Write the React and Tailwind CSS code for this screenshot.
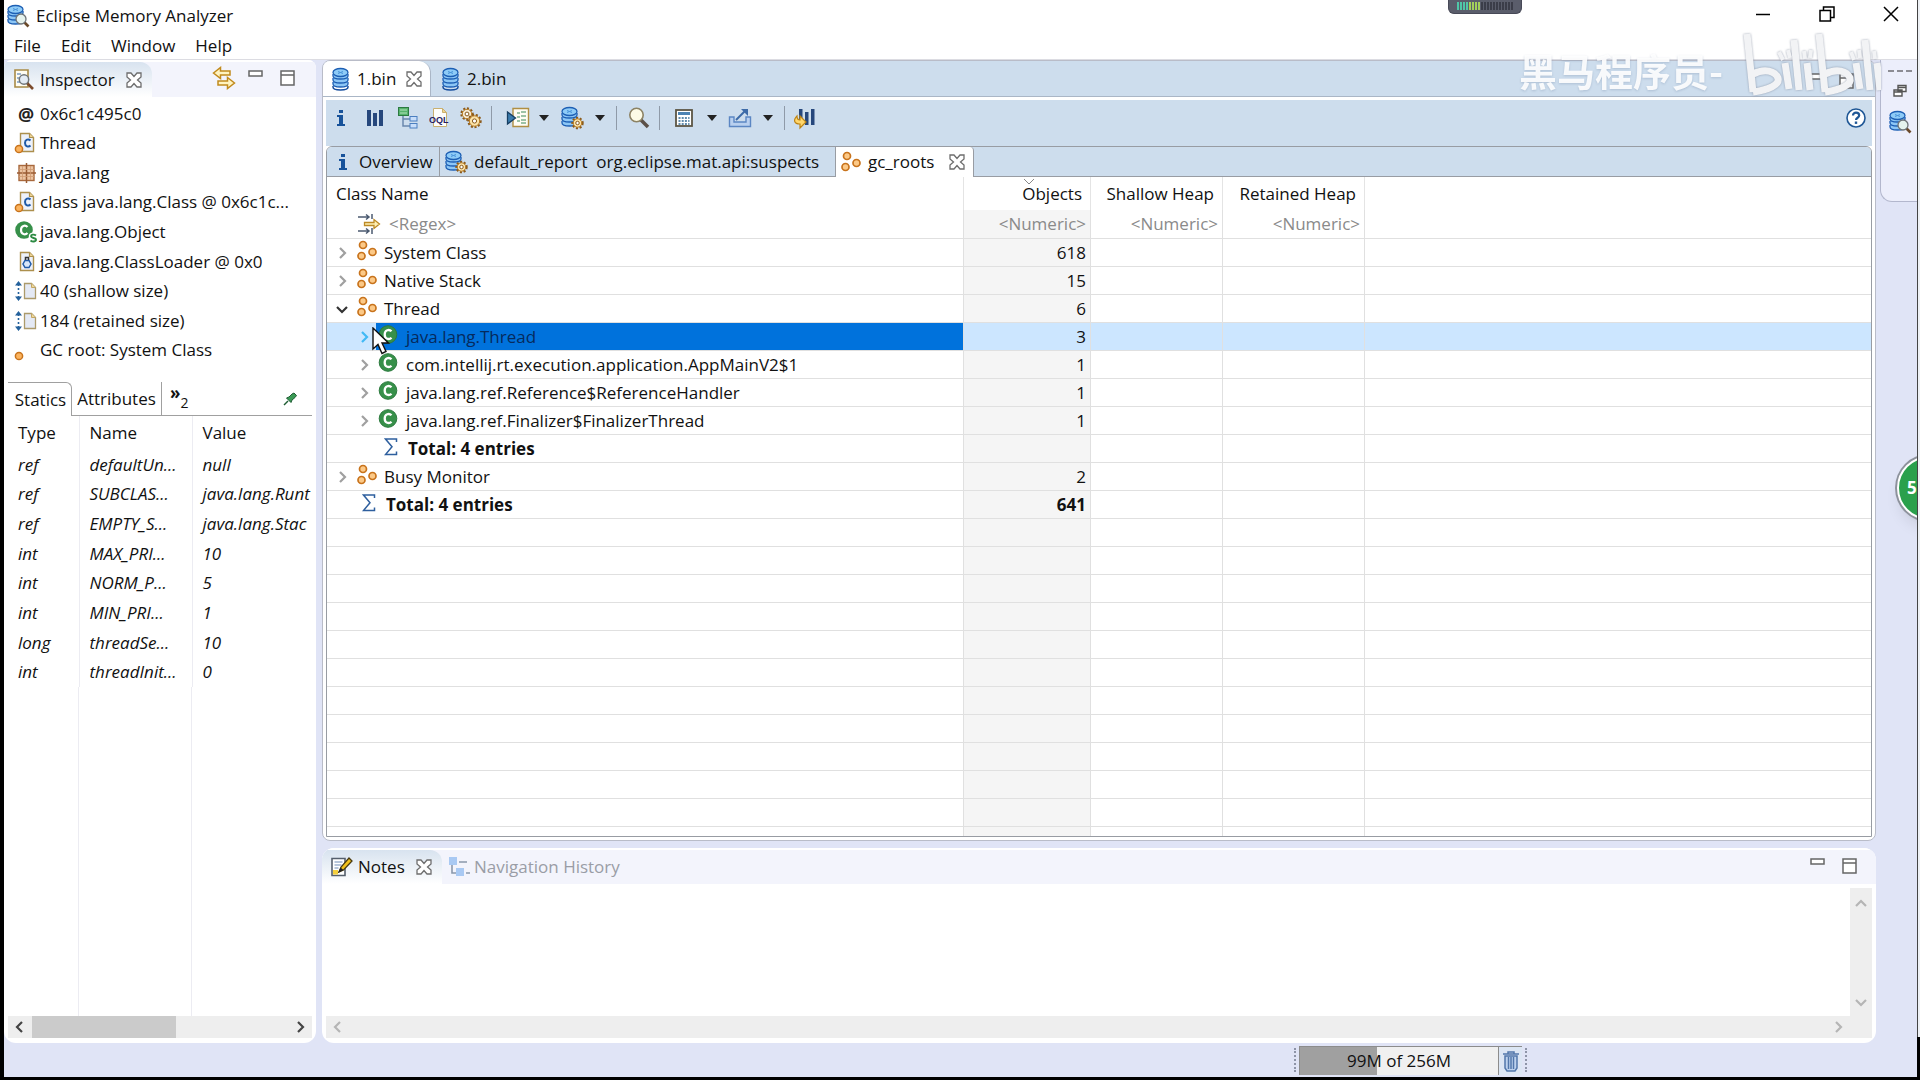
import React, { useState } from 'react';

const inspectorRows = [
    { icon: 'at', text: '0x6c1c495c0' },
    { icon: 'classFile', text: 'Thread' },
    { icon: 'package', text: 'java.lang' },
    { icon: 'classFile', text: 'class java.lang.Class @ 0x6c1c...' },
    { icon: 'superClass', text: 'java.lang.Object' },
    { icon: 'loader', text: 'java.lang.ClassLoader @ 0x0' },
    { icon: 'size', text: '40 (shallow size)' },
    { icon: 'size', text: '184 (retained size)' },
    { icon: 'root', text: 'GC root: System Class' },
];

const statics = [
    ['ref', 'defaultUn...', 'null'],
    ['ref', 'SUBCLAS...', 'java.lang.Runt'],
    ['ref', 'EMPTY_S...', 'java.lang.Stac'],
    ['int', 'MAX_PRI...', '10'],
    ['int', 'NORM_P...', '5'],
    ['int', 'MIN_PRI...', '1'],
    ['long', 'threadSe...', '10'],
    ['int', 'threadInit...', '0'],
];

const roots = [
    { kind: 'group', name: 'System Class', objects: 618 },
    { kind: 'group', name: 'Native Stack', objects: 15 },
    { kind: 'group', name: 'Thread', objects: 6, open: true },
    { kind: 'class', name: 'java.lang.Thread', objects: 3, selected: true },
    { kind: 'class', name: 'com.intellij.rt.execution.application.AppMainV2$1', objects: 1 },
    { kind: 'class', name: 'java.lang.ref.Reference$ReferenceHandler', objects: 1 },
    { kind: 'class', name: 'java.lang.ref.Finalizer$FinalizerThread', objects: 1 },
    { kind: 'total', name: 'Total: 4 entries', nested: true },
    { kind: 'group', name: 'Busy Monitor', objects: 2 },
    { kind: 'total', name: 'Total: 4 entries', objects: 641 },
];

const emptyRows = Array.from({ length: 12 }, (_, i) => i);

/* ---------- icons ---------- */

const Discs = () => (
    <g stroke="#1d5fb4" strokeWidth="1.3">
        {[17, 13, 9].map((y) => (
            <path key={y} d={`M2 ${y - 2}v2c0 4 15 4 15 0v-2`} fill="#8cc6f5" />
        ))}
        <ellipse cx="9.5" cy="5.5" rx="7.5" ry="4" fill="#8ecbf7" />
        <path d="M7 4.5l5 2M7 6.5l5-2" stroke="#4a94da" strokeWidth="1" />
    </g>
);

const DbIcon = () => (
    <svg className="w-5 h-6 shrink-0" viewBox="0 0 20 24" fill="none"><Discs /><path d="M2 19v1c0 4 15 4 15 0v-1" stroke="#174f9f" strokeWidth="1.5" /></svg>
);

const Cog = ({ x, y, r, fill = '#fbe3a8' }) => (
    <g transform={`translate(${x} ${y})`}>
        <circle r={r} fill="none" stroke="#8a5a1c" strokeWidth="2.4" strokeDasharray="2 1.6" />
        <circle r={r - 0.8} fill={fill} stroke="#b87a20" strokeWidth="1" />
        <circle r={r * 0.35} fill="#fff" stroke="#8a5a1c" strokeWidth="1" />
    </g>
);

const DbGearIcon = () => (
    <svg className="w-6 h-6 shrink-0" viewBox="0 0 24 24" fill="none"><Discs /><Cog x={17.5} y={17} r={5} /></svg>
);

const DbSearchIcon = () => (
    <svg className="w-6 h-6 shrink-0" viewBox="0 0 24 24" fill="none">
        <Discs />
        <path d="M18.500 18.500l4 4" stroke="#6b4a2a" strokeWidth="2.600" />
        <circle cx="15" cy="15" r="5" fill="#e6f3ee" stroke="#6f7478" strokeWidth="1.300" />
    </svg>
);

const InfoIcon = () => (
    <svg className="w-3 h-5 shrink-0" viewBox="0 0 12 20" fill="#17529a">
        <rect x="4" y="2" width="4" height="3" />
        <path d="M2 7h6v9h2v2H2v-2h2V9H2z" />
    </svg>
);

const BarsIcon = () => (
    <svg className="w-5 h-5 shrink-0" viewBox="0 0 20 20" fill="#26477c">
        <rect x="2" y="2" width="4" height="16" /><rect x="8" y="5" width="4" height="13" /><rect x="14" y="2" width="4" height="16" />
    </svg>
);

const TreeIcon = () => (
    <svg className="w-6 h-6 shrink-0" viewBox="0 0 24 24" fill="none">
        <path d="M6 10v10h7M6 13h7" stroke="#6a87ad" strokeWidth="1.500" />
        <rect x="1.500" y="1.500" width="10" height="8" fill="#56b36c" stroke="#2c7a42" />
        <path d="M3 4h7M3 7h7" stroke="#b5e2bd" />
        <rect x="13" y="10.500" width="7" height="4.500" fill="#c8defa" stroke="#4b7fc0" />
        <rect x="13" y="17.500" width="7" height="4.500" fill="#c8defa" stroke="#4b7fc0" />
    </svg>
);

const OqlIcon = () => (
    <svg className="w-5 h-6 shrink-0" viewBox="0 0 20 24" fill="none">
        <path d="M4.500 2.500h9l4 4v14h-13z" fill="#fdfdfb" stroke="#c9b070" />
        <path d="M13.500 2.500v4h4z" fill="#f0d58d" stroke="#c9b070" />
        <text x="0" y="17" fontSize="9" fontWeight="bold" fontFamily="Liberation Sans, sans-serif" fill="#2a1d63">OQL</text>
    </svg>
);

const GearsIcon = () => (
    <svg className="w-6 h-6 shrink-0" viewBox="0 0 24 24" fill="none">
        <Cog x={8} y={8} r={5.5} fill="#f7ecd4" /><Cog x={15.5} y={15} r={6} />
    </svg>
);

const RunReportIcon = () => (
    <svg className="w-6 h-6 shrink-0" viewBox="0 0 24 24" fill="none">
        <path d="M7 2.500h15.500v18H7z" fill="#fffdf4" stroke="#b08f43" strokeWidth="1.400" />
        <path d="M11 7h3M11 11h3M11 15h3M15 6h5M15 10h5M15 14h5M15 17h5" stroke="#3d8a58" strokeWidth="1.200" />
        <path d="M1.500 6v12l8-6z" fill="#3a7cae" stroke="#173f63" strokeWidth="1.300" />
    </svg>
);

const SearchIcon = () => (
    <svg className="w-6 h-6 shrink-0" viewBox="0 0 24 24" fill="none">
        <path d="M14 14l7 7" stroke="#5c5048" strokeWidth="3.600" />
        <circle cx="9.500" cy="9" r="6.700" fill="#fdfbe6" stroke="#8c8264" strokeWidth="1.600" />
    </svg>
);

const CalcIcon = () => (
    <svg className="w-5 h-5 shrink-0" viewBox="0 0 20 20" fill="none">
        <rect x="2" y="2" width="16" height="16" fill="#fff" stroke="#5b5544" strokeWidth="1.800" />
        <rect x="4" y="4" width="12" height="3" fill="#4c83b3" />
        <path d="M4.500 10h11M4.500 13h11M4.500 16h11" stroke="#2f6792" strokeWidth="1.600" strokeDasharray="2 1.200" />
    </svg>
);

const ExportIcon = () => (
    <svg className="w-6 h-6 shrink-0" viewBox="0 0 24 24" fill="none">
        <path d="M6 11H1.500v9.500h21V11H18v5H6z" fill="#b9d0ef" stroke="#5b86c3" strokeWidth="1.400" />
        <path d="M8 14L18 4" stroke="#3d6ba8" strokeWidth="2" />
        <path d="M13 3h7v7z" fill="#3d6ba8" />
    </svg>
);

const CompareIcon = () => (
    <svg className="w-6 h-6 shrink-0" viewBox="0 0 24 24" fill="none">
        <path d="M6 3h3.500v12H6zM12 6h3.500v13H12zM18 3h3.500v16H18z" fill="#26477c" />
        <path d="M4 10c-4 4-3 8 3 8v4l6-6-6-6v4c-2 0-3-1-3-4z" fill="#ffd66b" stroke="#bd8415" strokeWidth="1.200" />
    </svg>
);

const HelpIcon = () => (
    <svg className="w-[22px] h-[22px] shrink-0" viewBox="0 0 22 22" fill="none">
        <circle cx="11" cy="11" r="9" fill="#fff" stroke="#1f5796" strokeWidth="1.600" />
        <path d="M8 8.500c0-4 6.200-3.600 6.200 0 0 2.200-3.200 2.300-3.200 4.500" stroke="#1f5796" strokeWidth="2.200" />
        <rect x="9.800" y="14.500" width="2.400" height="2.400" fill="#1f5796" />
    </svg>
);

// three orange root dots
const RootsIcon = () => (
    <svg className="w-[22px] h-[22px] shrink-0" viewBox="0 0 22 22" fill="#fcc987" stroke="#c8731c" strokeWidth="1.700">
        <circle cx="7" cy="5" r="3.500" /><circle cx="5.500" cy="16" r="3.500" /><circle cx="16.500" cy="12" r="3.500" />
    </svg>
);

const ClassIcon = () => (
    <svg className="w-5 h-5 shrink-0" viewBox="0 0 20 20" fill="none">
        <circle cx="10" cy="9.500" r="8.800" fill="#37904a" stroke="#2c7a3e" />
        <path d="M13.500 6.300c-2.300-2.400-6.800-1.500-6.800 3.200s4.500 5.600 6.800 3.200" stroke="#fff" strokeWidth="2.300" />
    </svg>
);

const SigmaIcon = () => (
    <svg className="w-[14px] h-[18px] shrink-0" viewBox="0 0 14 18" fill="none">
        <path d="M12.500 4V1H1.500L8 8.700 1.500 16.500h11v-3" stroke="#2e5f9e" strokeWidth="1.500" />
    </svg>
);

const FilterIcon = () => (
    <svg className="w-6 h-6 shrink-0" viewBox="0 0 24 24" fill="none">
        <path d="M1 5h11M9 2.500l3 2.500-3 2.500M15 2v5M1 19h11M9 16.500l3 2.500-3 2.500M15 16v6" stroke="#4b5a70" strokeWidth="1.500" />
        <path d="M7.500 10.500H17V7.500l5.500 4.500-5.500 4.500v-3H7.500z" fill="#fff0b4" stroke="#bd8a26" strokeWidth="1.300" />
    </svg>
);

const PageShape = () => (
    <>
        <path d="M6.500 2.500h9l4 4v14h-13z" fill="#edf1fa" stroke="#ac8f4d" strokeWidth="1.400" />
        <path d="M15.500 2.500v4h4" fill="#f0d899" stroke="#ac8f4d" strokeWidth="1.200" />
    </>
);

const Dot = ({ cx = 5, cy = 18 }) => <circle cx={cx} cy={cy} r="3.600" fill="#fcb45f" stroke="#c8731c" strokeWidth="1.500" />;

const inspectorIcons = {
    at: <text x="4" y="19" fontSize="18" fontWeight="bold" fontFamily="Open Sans, sans-serif" fill="#222">@</text>,
    classFile: (
        <>
            <PageShape />
            <path d="M16.500 9.500c-2-2-5.500-1-5.500 2.500s3.500 4.500 5.500 2.500" stroke="#1f5aa8" strokeWidth="2" />
            <Dot />
        </>
    ),
    package: (
        <>
            <rect x="5" y="4.500" width="15" height="15" fill="#ecc4a2" stroke="#a8683c" strokeWidth="1.400" />
            <path d="M12.500 2v20M3 12h19" stroke="#9a5c34" strokeWidth="1.500" />
            <path d="M8.500 5v14M16.500 5v14M5 8.500h15M5 15.500h15" stroke="#cf9a72" strokeWidth="0.800" />
        </>
    ),
    superClass: (
        <>
            <circle cx="10" cy="10" r="8.800" fill="#37904a" />
            <path d="M13.500 7c-2.300-2.400-6.500-1.500-6.500 3s4.200 5.300 6.500 3" stroke="#fff" strokeWidth="2.200" />
            <path d="M22 15.500c-2-1.500-5-1-5 .8 0 2.200 5 1.200 5 3.500 0 2-3.500 2.200-5.500.6" stroke="#fff" strokeWidth="4.500" />
            <path d="M22 15.500c-2-1.500-5-1-5 .8 0 2.200 5 1.200 5 3.500 0 2-3.500 2.200-5.500.6" stroke="#2c8a42" strokeWidth="1.900" />
        </>
    ),
    loader: (
        <>
            <PageShape />
            <path d="M11 10.500h4l2 3.500-2 3.500h-4L9 14z" fill="#d7e6fa" stroke="#1f5aa8" strokeWidth="1.500" />
            <path d="M11.500 10V7.500h3V10" stroke="#333" strokeWidth="1.500" />
        </>
    ),
    size: (
        <>
            <path d="M10.500 4.500h7l4 4v11h-11z" fill="#e4e9f4" stroke="#ac9a6a" strokeWidth="1.300" />
            <path d="M17.500 4.500v4h4" fill="#f0d899" stroke="#c2a766" />
            <path d="M4.500 5v14" stroke="#24619c" strokeWidth="1.600" strokeDasharray="2 2" />
            <path d="M1 6.500L4.500 2 8 6.500zM1 17.500L4.500 22 8 17.500z" fill="#24619c" />
        </>
    ),
    root: <Dot />,
};

const InspectorIcon = ({ name }) => (
    <svg className="w-6 h-6 shrink-0" viewBox="0 0 24 24" fill="none">{inspectorIcons[name]}</svg>
);

const InspectIcon = () => (
    <svg className="w-6 h-6 shrink-0" viewBox="0 0 24 24" fill="none">
        <path d="M3 2h13v17H3z" fill="#fffdf2" stroke="#a88a45" strokeWidth="1.600" />
        <path d="M5 6h4M5 10h3M5 14h3" stroke="#7c9cc4" strokeWidth="1.400" />
        <path d="M15 15l6 6" stroke="#7c4b2c" strokeWidth="2.600" />
        <circle cx="12" cy="11.500" r="4.700" fill="#e4ecf4" stroke="#6f7478" strokeWidth="1.500" />
    </svg>
);

const LinkArrowsIcon = () => (
    <svg className="w-6 h-6 shrink-0" viewBox="0 0 24 24" fill="#fff3c0" stroke="#c18a1c" strokeWidth="1.500">
        <path d="M1.500 7l7-5.500V5H18v4H8.500v3.500z" /><path d="M22.500 17l-7-5.500V15H6v4h9.500v3.500z" />
    </svg>
);

const NotesIcon = () => (
    <svg className="w-6 h-6 shrink-0" viewBox="0 0 24 24" fill="none">
        <path d="M2 3.500h13v17H2z" fill="#fff" stroke="#555f6c" strokeWidth="1.600" />
        <path d="M4.500 7h8M4.500 10h7M4.500 13h4" stroke="#6e8cb5" strokeWidth="1.200" />
        <path d="M3 15h5v4.500H3z" fill="#f5cf3d" />
        <path d="M9 17l2-5 8-9 3 3-8.500 9z" fill="#f2c21a" stroke="#493a10" strokeWidth="1.300" />
        <path d="M8 18l2.500-5.500 3 2.500z" fill="#222" />
    </svg>
);

const HistoryIcon = () => (
    <svg className="w-6 h-6 shrink-0" viewBox="0 0 24 24" fill="none">
        <path d="M4 9v9h5M11 7h8M18 18h4" stroke="#8b98ab" strokeWidth="1.600" />
        <rect x="1" y="2" width="8" height="8" fill="#a9c9f3" /><rect x="8" y="13" width="8" height="8" fill="#a9c9f3" />
    </svg>
);

const CloseTab = ({ label }) => (
    <button aria-label={label} className="shrink-0">
        <svg className="w-4 h-4" viewBox="0 0 16 16" fill="none">
            <path d="M1 1h4l3 3.500L11 1h4v4l-3.500 3 3.500 3v4h-4l-3-3.500L5 15H1v-4l3.500-3L1 5z" fill="#fff" stroke="#6e6e6e" strokeWidth="1.300" />
        </svg>
    </button>
);

const ViewButtons = () => (
    <div className="flex items-start gap-4">
        <button aria-label="Minimize">
            <svg className="w-4 h-4" viewBox="0 0 16 16" fill="#fff" stroke="#666" strokeWidth="1.500"><rect x="1" y="1" width="13" height="5" /></svg>
        </button>
        <button aria-label="Maximize">
            <svg className="w-4 h-4" viewBox="0 0 16 16" fill="#fff" stroke="#666" strokeWidth="1.500"><path d="M1 1h13v14H1zM1 5h13" /></svg>
        </button>
    </div>
);

const Chevron = ({ dir, className }) => {
    const paths = {
        right: 'M4 1l5 5-5 5',
        left: 'M8 1L3 6l5 5',
        down: 'M1 4l5 5 5-5',
        up: 'M1 8l5-5 5 5',
    };
    return (
        <svg className={`w-3 h-3 shrink-0 ${className}`} viewBox="0 0 12 12" fill="none" stroke="currentColor" strokeWidth="2.200">
            <path d={paths[dir]} />
        </svg>
    );
};

const Caret = ({ label, wide }) => (
    <button aria-label={label} className={`flex justify-center ${wide ? 'w-8' : 'w-7'}`}>
        <svg className="w-3 h-2" viewBox="0 0 12 8" fill="#222"><path d="M1 1h10L6 7z" /></svg>
    </button>
);

const Sep = () => <span className="w-px h-6 bg-[#8f9aa8]" />;

/* ---------- window parts ---------- */

const TitleBar = () => (
    <header className="bg-white shrink-0 border-b border-[#dcdce2]">
        <div className="flex items-center h-8 pl-0.5 pr-[18px]">
            <DbSearchIcon />
            <h1 className="ml-1.5 flex-1">Eclipse Memory Analyzer</h1>
            <div className="flex items-center gap-12 h-7 pb-1">
                <button aria-label="Minimize window">
                    <svg className="w-4 h-4" viewBox="0 0 16 16" stroke="#000" strokeWidth="1.500"><path d="M1 8.500h14" /></svg>
                </button>
                <button aria-label="Restore window">
                    <svg className="w-4 h-4" viewBox="0 0 16 16" fill="none" stroke="#000" strokeWidth="1.500"><path d="M1 4.500h10.500V15H1zM4.500 4.500V1H15v10.500h-3.500" /></svg>
                </button>
                <button aria-label="Close window">
                    <svg className="w-4 h-4" viewBox="0 0 16 16" stroke="#000" strokeWidth="1.500"><path d="M1 1l14 14M15 1L1 15" /></svg>
                </button>
            </div>
        </div>
        <nav className="flex items-center h-[27px] pl-2.5 gap-5">
            <button>File</button>
            <button>Edit</button>
            <button>Window</button>
            <button>Help</button>
        </nav>
    </header>
);

const Inspector = () => (
    <aside className="w-[312px] shrink-0 flex flex-col bg-white rounded-t-lg rounded-b-xl overflow-hidden">
        <div className="flex h-[37px] bg-[#f3f4fc] shrink-0 border-t-2 border-white">
            <div className="flex items-center w-[148px] pl-2 rounded-tr-xl bg-linear-to-b from-[#d8e3ef] to-white">
                <InspectIcon />
                <span className="ml-1 w-[86px]">Inspector</span>
                <CloseTab label="Close Inspector" />
            </div>
            <div className="flex-1 flex items-start justify-end gap-3 pt-1 pr-5">
                <button aria-label="Link with snapshot"><LinkArrowsIcon /></button>
                <div className="pt-1"><ViewButtons /></div>
            </div>
        </div>

        <ul className="grid auto-rows-fr h-[266px] mt-0.5 pl-2.5 pr-2 shrink-0">
            {inspectorRows.map((row, i) => (
                <li key={i} className="flex items-center min-w-0">
                    <InspectorIcon name={row.icon} />
                    <span className="ml-0.5 whitespace-nowrap">{row.text}</span>
                </li>
            ))}
        </ul>

        <div className="flex h-[34px] mt-[17px] ml-1 mr-1 shrink-0">
            <button className="w-16 border-t border-r border-[#a0a0a0] rounded-tr-md pl-0.5">Statics</button>
            <button className="w-[90px] border-r border-b border-[#a0a0a0]">Attributes</button>
            <div className="flex-1 flex justify-between border-b border-[#a0a0a0] pl-2 pr-3.5">
                <button aria-label="Show 2 more tabs" className="flex items-center">
                    <span className="font-bold leading-5 pb-3">»</span>
                    <span className="text-sm leading-4 pt-2">2</span>
                </button>
                <button aria-label="Pin tab">
                    <svg className="w-4 h-4" viewBox="0 0 16 16" fill="#3a9a55" stroke="#1e5c33">
                        <path d="M2 14l4-4" strokeWidth="1.500" /><path d="M4.500 7l4.500 4.500 1-2.500 3-2.500 1.500-2-2.500-2.500-2 1-3 3z" />
                    </svg>
                </button>
            </div>
        </div>

        <div className="flex-1 min-h-0 overflow-hidden mx-1 flex flex-col">
            <table className="w-full table-fixed border-collapse">
                <colgroup><col className="w-[71px]" /><col className="w-[113px]" /><col /></colgroup>
                <thead>
                    <tr className="h-[34px] text-left">
                        <th className="font-normal pl-2.5 border-r border-[#ececf2]">Type</th>
                        <th className="font-normal pl-2.5 border-r border-[#ececf2]">Name</th>
                        <th className="font-normal pl-2.5">Value</th>
                    </tr>
                </thead>
            </table>
            <table className="w-full h-[237px] table-fixed border-collapse italic">
                <colgroup><col className="w-[71px]" /><col className="w-[113px]" /><col /></colgroup>
                <tbody>
                    {statics.map(([type, name, value]) => (
                        <tr key={name}>
                            <td className="pl-2.5 border-r border-[#ececf2]">{type}</td>
                            <td className="pl-2.5 border-r border-[#ececf2] whitespace-nowrap">{name}</td>
                            <td className="pl-2.5 whitespace-nowrap">{value}</td>
                        </tr>
                    ))}
                </tbody>
            </table>
            <div className="flex-1 flex">
                <div className="w-[71px] border-r border-[#ececf2]" />
                <div className="w-[113px] border-r border-[#ececf2]" />
            </div>
        </div>

        <div className="flex items-center h-[22px] mx-1 mb-[5px] bg-[#eeeeee] shrink-0">
            <button aria-label="Scroll left" className="w-6 flex justify-center text-[#444]"><Chevron dir="left" /></button>
            <div className="h-full w-36 bg-[#cbcbcb]" />
            <button aria-label="Scroll right" className="ml-auto w-6 flex justify-center text-[#444]"><Chevron dir="right" /></button>
        </div>
    </aside>
);

const Toolbar = () => (
    <div className="flex items-center h-[46px] pb-2.5 pl-[9px] pr-[5px] bg-[#cddded] shrink-0">
        <button aria-label="Overview" className="mr-[18px]"><InfoIcon /></button>
        <button aria-label="Histogram" className="mr-3"><BarsIcon /></button>
        <button aria-label="Dominator tree" className="mr-2"><TreeIcon /></button>
        <button aria-label="OQL" className="mr-2.5"><OqlIcon /></button>
        <button aria-label="Thread overview" className="mr-2"><GearsIcon /></button>
        <Sep />
        <button aria-label="Run report" className="ml-3.5"><RunReportIcon /></button>
        <Caret label="Run report menu" />
        <button aria-label="Query browser" className="ml-0.5"><DbGearIcon /></button>
        <Caret label="Query browser menu" wide />
        <Sep />
        <button aria-label="Find object" className="ml-2.5 mr-2"><SearchIcon /></button>
        <Sep />
        <button aria-label="Calculate" className="ml-3.5 mr-1"><CalcIcon /></button>
        <Caret label="Calculate menu" />
        <button aria-label="Export" className="ml-0.5"><ExportIcon /></button>
        <Caret label="Export menu" wide />
        <Sep />
        <button aria-label="Compare" className="ml-2"><CompareIcon /></button>
        <button aria-label="Help" className="ml-auto"><HelpIcon /></button>
    </div>
);

const NameCell = ({ row }) => {
    if (row.kind === 'group') {
        return (
            <div className="flex items-center h-full pl-[9px]">
                <button aria-label={`Toggle ${row.name}`}>
                    <Chevron dir={row.open ? 'down' : 'right'} className={row.open ? 'text-[#333]' : 'text-[#a0a0a0]'} />
                </button>
                <span className="ml-2 mr-1.5 pb-1"><RootsIcon /></span>
                {row.name}
            </div>
        );
    }
    if (row.kind === 'class') {
        return (
            <div className="flex items-center h-full pl-[31px]">
                <button aria-label={`Toggle ${row.name}`} className="w-[18px]">
                    <Chevron dir="right" className={row.selected ? 'text-[#41b9f5]' : 'text-[#a0a0a0]'} />
                </button>
                <span className={`flex items-center flex-1 h-full ${row.selected ? 'bg-[#0072dc] text-[#062a5c]' : ''}`}>
                    <span className="ml-0.5 mr-2 pb-1"><ClassIcon /></span>
                    {row.name}
                </span>
            </div>
        );
    }
    return (
        <div className={`flex items-center h-full font-bold ${row.nested ? 'pl-[57px]' : 'pl-[35px]'}`}>
            <span className="mr-2.5 pb-1"><SigmaIcon /></span>
            {row.name}
        </div>
    );
};

const RootsTable = () => (
    <div className="flex-1 min-h-0 overflow-hidden bg-white">
        <table className="w-full table-fixed border-separate border-spacing-0">
            <colgroup>
                <col className="w-[637px]" /><col className="w-[127px]" /><col className="w-[132px]" /><col className="w-[142px]" /><col />
            </colgroup>
            <thead>
                <tr className="h-[33px]">
                    <th className="font-normal text-left pl-[9px] border-r border-[#e4e4e4]">Class Name</th>
                    <th className="font-normal text-right pr-2 border-r border-[#e4e4e4] relative">
                        <svg className="absolute left-[59px] top-0.5 w-3 h-1.5" viewBox="0 0 12 6" fill="none" stroke="#888"><path d="M1 0l5 5 5-5" /></svg>
                        Objects
                    </th>
                    <th className="font-normal text-right pr-2 border-r border-[#e4e4e4]">Shallow Heap</th>
                    <th className="font-normal text-right pr-2 border-r border-[#e4e4e4]">Retained Heap</th>
                    <th />
                </tr>
                <tr className="h-[29px]">
                    <th className="font-normal p-0 border-r border-b border-[#e0e0e0]">
                        <div className="flex items-center pl-[30px]">
                            <FilterIcon />
                            <input aria-label="Class name filter" placeholder="<Regex>" className="ml-2 flex-1 placeholder:text-[#8a8a8a] outline-none" />
                        </div>
                    </th>
                    {['Objects', 'Shallow heap', 'Retained heap'].map((name, i) => (
                        <th key={name} className={`font-normal p-0 pr-1 border-r border-b border-[#e0e0e0] ${i === 0 ? 'bg-[#f5f5f5]' : ''}`}>
                            <input aria-label={`${name} filter`} placeholder="<Numeric>" className="w-full text-right placeholder:text-[#8a8a8a] outline-none" />
                        </th>
                    ))}
                    <th className="border-b border-[#e0e0e0]" />
                </tr>
            </thead>
            <tbody>
                {roots.map((row, i) => (
                    <tr key={i} className={`h-7 ${row.selected ? 'bg-[#cce6ff]' : ''}`}>
                        <td className="p-0 h-7 border-r border-b border-[#e0e0e0] whitespace-nowrap"><NameCell row={row} /></td>
                        <td className={`p-0 pr-1 text-right border-r border-b border-[#e0e0e0] ${row.selected ? '' : 'bg-[#f5f5f5]'} ${row.kind === 'total' ? 'font-bold' : ''}`}>{row.objects}</td>
                        <td className="border-r border-b border-[#e0e0e0]" />
                        <td className="border-r border-b border-[#e0e0e0]" />
                        <td className="border-b border-[#e0e0e0]" />
                    </tr>
                ))}
                {emptyRows.map((i) => (
                    <tr key={i} className="h-7">
                        <td className="border-r border-b border-[#e0e0e0]" />
                        <td className="border-r border-b border-[#e0e0e0] bg-[#f5f5f5]" />
                        <td className="border-r border-b border-[#e0e0e0]" />
                        <td className="border-r border-b border-[#e0e0e0]" />
                        <td className="border-b border-[#e0e0e0]" />
                    </tr>
                ))}
            </tbody>
        </table>
    </div>
);

const Editor = () => (
    <section className="flex-1 min-h-0 flex flex-col bg-white border border-[#b9bcc8] rounded-t-lg rounded-b-lg overflow-hidden">
        <div className="flex h-9 bg-[#cddded] border-b border-[#aab6c6] shrink-0">
            <div className="flex items-center w-[108px] pl-2 bg-white border-r border-[#aab6c6] rounded-tr-xl">
                <DbIcon />
                <span className="ml-1.5 w-[49px]">1.bin</span>
                <CloseTab label="Close 1.bin" />
            </div>
            <button className="flex items-center pl-2.5 gap-1.5">
                <DbIcon />
                2.bin
            </button>
            <div className="ml-auto pt-3 pr-5"><ViewButtons /></div>
        </div>

        <div className="flex-1 min-h-0 flex flex-col p-[3px]">
            <Toolbar />
            <div className="flex-1 min-h-0 flex flex-col border border-[#989ca3] rounded-t-md overflow-hidden">
                <div className="flex h-[30px] bg-[#cddded] shrink-0">
                    <button className="flex items-center w-[113px] pl-2.5 border-r border-b border-[#989ca3]">
                        <InfoIcon />
                        <span className="ml-2.5">Overview</span>
                    </button>
                    <button className="flex items-center w-[396px] pl-1 border-r border-b border-[#989ca3]">
                        <DbGearIcon />
                        <span className="ml-1.5 whitespace-pre">default_report  org.eclipse.mat.api:suspects</span>
                    </button>
                    <div className="flex items-center w-[138px] pl-1 bg-white border-r border-[#989ca3] rounded-tr-sm">
                        <RootsIcon />
                        <span className="ml-1.5 w-[81px]">gc_roots</span>
                        <CloseTab label="Close gc_roots" />
                    </div>
                    <div className="flex-1 border-b border-[#989ca3]" />
                </div>
                <RootsTable />
            </div>
        </div>
    </section>
);

const Notes = () => {
    const [note, setNote] = useState('');

    return (
        <section className="h-[195px] shrink-0 flex flex-col bg-white rounded-xl overflow-hidden">
            <div className="flex h-9 bg-[#f3f4fc] shrink-0 border-t-2 border-white">
                <div className="flex items-center w-[120px] pl-2 rounded-tr-xl bg-linear-to-b from-[#d8e3ef] to-white">
                    <NotesIcon />
                    <span className="ml-1 w-[58px]">Notes</span>
                    <CloseTab label="Close Notes" />
                </div>
                <button className="flex items-center ml-1.5 gap-0.5 text-[#9a9da6]">
                    <HistoryIcon />
                    Navigation History
                </button>
                <div className="ml-auto pt-2 pr-[18px]"><ViewButtons /></div>
            </div>
            <div className="flex flex-1 mt-1 mx-1 min-h-0">
                <textarea aria-label="Notes" value={note} onChange={(e) => setNote(e.target.value)} className="flex-1 resize-none outline-none" />
                <div className="w-[22px] flex flex-col items-center justify-between pt-2.5 pb-2 bg-[#eeeeee] text-[#b5b5b5]">
                    <Chevron dir="up" />
                    <Chevron dir="down" />
                </div>
            </div>
            <div className="flex items-center justify-between h-[22px] mx-1 mb-[5px] pl-1.5 pr-7 bg-[#eeeeee] text-[#b5b5b5] shrink-0">
                <Chevron dir="left" />
                <Chevron dir="right" />
            </div>
        </section>
    );
};

const PerspectiveBar = () => (
    <div className="w-[37px] h-[142px] shrink-0 flex flex-col items-center gap-3 pt-2.5 pl-0.5 bg-[#eceefb] border-l border-b border-[#b3b7cd] rounded-bl-xl">
        <div className="w-6 border-t-2 border-dashed border-[#8c8c94]" />
        <button aria-label="Restore view">
            <svg className="w-3.5 h-3.5" viewBox="0 0 14 14" fill="#fff" stroke="#555" strokeWidth="1.400"><path d="M5 1.500h8v6H5zM5 3.500h8M1 6h8v6H1zM1 8h8" /></svg>
        </button>
        <button aria-label="Memory analysis perspective"><DbSearchIcon /></button>
    </div>
);

const Grip = () => <span className="h-6 border-l-2 border-dotted border-[#8e94a8]" />;

const StatusBar = () => (
    <footer className="flex items-center justify-end h-[34px] pr-[390px] gap-[3px] shrink-0">
        <Grip />
        <div className="relative flex items-center justify-center w-[199px] h-[29px] border-t border-l border-[#8c8c8c] bg-[#f0f0f0]">
            <div className="absolute inset-y-0 left-0 bg-[#a0a0a0]" style={{ width: `${(99 / 256) * 100}%` }} />
            <span className="relative">99M of 256M</span>
        </div>
        <button aria-label="Run garbage collector" className="w-6 h-[29px] -ml-[3px] flex items-center justify-center border-t border-l border-[#8c8c8c] bg-[#dce6f4]">
            <svg className="w-4 h-[22px]" viewBox="0 0 16 22" fill="none" stroke="#5277ab" strokeWidth="1.500">
                <path d="M0 4h16M5 4V2h6v2" /><path d="M2 6h12v12l-2 3H4l-2-3zM5.500 7v12M8 7v12M10.500 7v12" fill="#bdd2ee" />
            </svg>
        </button>
        <Grip />
    </footer>
);

const Watermark = () => (
    <div className="absolute right-9 top-8 flex items-center gap-[18px] pointer-events-none text-white/90">
        <span className="mt-3 text-[38px] leading-10 font-bold [font-family:'Noto_Sans_CJK_SC',sans-serif] drop-shadow-[0_1px_1px_rgba(120,140,170,0.4)]">黑马程序员-</span>
        <svg className="w-[140px] h-16 drop-shadow-[0_0_1px_rgba(120,130,150,0.7)]" viewBox="0 0 140 64" fill="none" stroke="#f2f3f5" strokeWidth="7">
            <path d="M6 2l6 58M12 42c12-6 22-3 25 4 2 7-10 12-25 14" />
            <path d="M44 31l4 26M53 8l5 50M66 31l3 27" />
            <path d="M38 20l4 8M47 18l2 8M63 19l1 8M70 18l-1 8" strokeWidth="4" />
            <path d="M78 2l6 58M84 42c12-6 22-3 25 4 2 7-10 12-25 14" />
            <path d="M115 31l4 26M124 8l5 50M136 31l3 27" />
            <path d="M110 20l3 8M118 18l1 8M133 19l1 8" strokeWidth="4" />
        </svg>
    </div>
);

// small recorder level meter docked to the top edge of the screen
const LevelMeter = () => (
    <div className="absolute right-[398px] top-0 w-[74px] h-3.5 px-2 pt-0.5 rounded-b-md bg-[#5a5d6b] border border-t-0 border-[#474957]">
        <div className="flex gap-px h-2">
            {Array.from({ length: 19 }, (_, i) => (
                <span key={i} className={`w-0.5 h-full ${i < 4 ? 'bg-[#4fc7a8]' : i < 8 ? 'bg-[#a3d05a]' : 'bg-[#3b3d49]'}`} />
            ))}
        </div>
    </div>
);

const Cursor = () => (
    <svg className="absolute left-[371px] top-[327px] w-5 h-7 pointer-events-none" viewBox="0 0 20 28" fill="#fff" stroke="#111" strokeWidth="1.400">
        <path d="M2 1v21l5-4.500 4 9 4-2-4-8.500h6.500z" />
    </svg>
);

export default function App() {
    return (
        <div className="relative h-screen overflow-hidden flex bg-black pl-1 pb-[3px] text-[17px] leading-6 text-[#111] [font-family:'Open_Sans','Noto_Sans_CJK_SC',sans-serif]">
            <div className="relative flex-1 min-w-0 flex flex-col overflow-hidden bg-[#e0e4f6]">
                <TitleBar />
                <main className="flex-1 min-h-0 flex">
                    <Inspector />
                    <div className="flex-1 min-w-0 flex flex-col gap-[7px] ml-[6px] mr-1">
                        <Editor />
                        <Notes />
                    </div>
                    <PerspectiveBar />
                </main>
                <StatusBar />
                <Watermark />
                <div className="absolute -right-11 top-[456px] w-16 h-16 rounded-full bg-[#2aa04c] border-2 border-white ring-2 ring-[#8d929c] shadow-lg pl-2 flex items-center font-bold text-white">5</div>
            </div>
            <div className="w-[3px] mb-10 border-l border-[#444] bg-[#eef1f5]" />
            <LevelMeter />
            <Cursor />
        </div>
    );
}
